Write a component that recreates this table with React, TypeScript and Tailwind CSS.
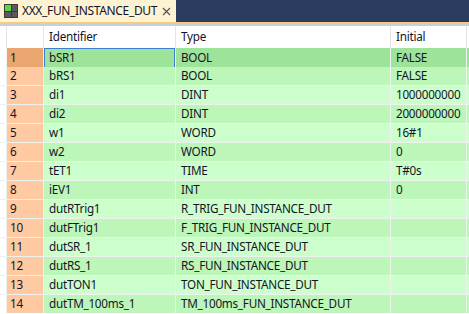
import React from "react";

type Row = { id: string; type: string; init: string };

const rows: Row[] = [
  { id: "bSR1", type: "BOOL", init: "FALSE" },
  { id: "bRS1", type: "BOOL", init: "FALSE" },
  { id: "di1", type: "DINT", init: "1000000000" },
  { id: "di2", type: "DINT", init: "2000000000" },
  { id: "w1", type: "WORD", init: "16#1" },
  { id: "w2", type: "WORD", init: "0" },
  { id: "tET1", type: "TIME", init: "T#0s" },
  { id: "iEV1", type: "INT", init: "0" },
  { id: "dutRTrig1", type: "R_TRIG_FUN_INSTANCE_DUT", init: "" },
  { id: "dutFTrig1", type: "F_TRIG_FUN_INSTANCE_DUT", init: "" },
  { id: "dutSR_1", type: "SR_FUN_INSTANCE_DUT", init: "" },
  { id: "dutRS_1", type: "RS_FUN_INSTANCE_DUT", init: "" },
  { id: "dutTON1", type: "TON_FUN_INSTANCE_DUT", init: "" },
  { id: "dutTM_100ms_1", type: "TM_100ms_FUN_INSTANCE_DUT", init: "" },
];

const cols = "grid grid-cols-[6px_36px_131px_214px_75px_1fr] gap-x-px";

const TabIcon = () => (
  <div className="grid grid-cols-2 gap-px w-[14px] h-[14px] bg-[#3a3a3a] p-px shrink-0">
    <div className="bg-[#5cd63c]" />
    <div className="bg-[#5a5a5a]" />
    <div className="bg-[#5a5a5a]" />
    <div className="bg-[#5a5a5a]" />
  </div>
);

const App = () => {
  return (
    <div
      className="w-[469px] h-[314px] overflow-hidden bg-white text-[11.7px] tracking-[-0.25px] text-[#141428]"
      style={{ fontFamily: '"Noto Sans", "Open Sans", sans-serif' }}
    >
      <div className="flex h-[22px] bg-[#2c3c5e]">
        <div className="flex items-center w-[176px] bg-[#fdf3d2] pl-1 gap-[4px]">
          <TabIcon />
          <span className="text-[12px] tracking-[-0.35px] leading-none">XXX_FUN_INSTANCE_DUT</span>
          <svg width="9" height="9" viewBox="0 0 9 9" className="ml-auto mr-[5px] shrink-0">
            <path d="M1 1L8 8M8 1L1 8" stroke="#555" strokeWidth="1.2" />
          </svg>
        </div>
      </div>
      <div className="h-[2px] bg-[#f4ca84]" />
      <div className="h-[2px] bg-[#c9ced8]" />

      <div className={`${cols} h-[22px] bg-[#e4e4e4]`}>
        <div className="bg-white" />
        <div className="bg-white" />
        <div className="bg-white flex items-center pl-[5px]">Identifier</div>
        <div className="bg-white flex items-center pl-[5px]">Type</div>
        <div className="bg-white flex items-center pl-[5px]">Initial</div>
        <div className="bg-white" />
      </div>

      <div className="flex flex-col gap-y-px bg-[#eef2ee]">
        {rows.map((r, i) => {
          const sel = i === 0;
          const odd = i % 2 === 1;
          const cell = sel ? "bg-[#9de39a]" : odd ? "bg-[#bcf6b9]" : "bg-[#ccffcc]";
          return (
            <div key={r.id} className={`${cols} h-[18px]`}>
              <div className="bg-white" />
              <div className={`${sel ? "bg-[#e9a66e]" : "bg-[#ffc9a1]"} flex items-center pl-[3px]`}>
                {i + 1}
              </div>
              <div
                className={`${cell} flex items-center ${sel ? "border border-[#3b7fd4] pl-[4px]" : "pl-[5px]"}`}
              >
                {r.id}
              </div>
              <div className={`${cell} flex items-center pl-[5px]`}>{r.type}</div>
              <div className={`${cell} flex items-center pl-[5px]`}>{r.init}</div>
              <div className={cell} />
            </div>
          );
        })}
      </div>
    </div>
  );
};

export default App;
